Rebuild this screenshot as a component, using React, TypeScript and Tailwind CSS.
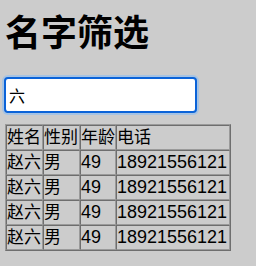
import { useState } from "react";

const people = [
  { name: "赵六", sex: "男", age: 49, phone: "18921556121" },
  { name: "赵六", sex: "男", age: 49, phone: "18921556121" },
  { name: "赵六", sex: "男", age: 49, phone: "18921556121" },
  { name: "赵六", sex: "男", age: 49, phone: "18921556121" },
];

const cell =
  "whitespace-nowrap border border-t-[#6e6e6e] border-l-[#6e6e6e] border-b-[#9a9a9a] border-r-[#9a9a9a] p-0 text-left font-normal align-middle leading-[23px]";

export default function App() {
  const [query, setQuery] = useState("六");
  const rows = people.filter((p) => p.name.includes(query));

  return (
    <div className="min-h-screen bg-[#cccccc] px-[5px] pt-[12px] text-black [font-family:'Liberation_Sans','Noto_Sans_CJK_SC',sans-serif]">
      <h1 className="text-[36px] font-bold leading-[36px] [font-family:'Noto_Sans_CJK_SC',sans-serif]">
        名字筛选
      </h1>

      <input
        value={query}
        onChange={(e) => setQuery(e.target.value)}
        className="ml-[-1px] mt-[29px] block h-[36px] w-[193px] rounded-[4px] border-2 border-[#0b63d8] bg-white px-[3px] text-[16px] outline-none shadow-[0_0_0_2px_#a6c3e3] [font-family:'Noto_Sans_CJK_SC',sans-serif]"
      />

      {/* table border=1 cellspacing=0 look */}
      <table className="mt-[11px] border-separate border-spacing-0 border border-t-[#9a9a9a] border-l-[#9a9a9a] border-b-[#6e6e6e] border-r-[#6e6e6e] text-[17px]">
        <thead>
          <tr>
            <th className={`${cell} w-[37px]`}>姓名</th>
            <th className={`${cell} w-[37px]`}>性别</th>
            <th className={`${cell} w-[36px]`}>年龄</th>
            <th className={`${cell} w-[114px]`}>电话</th>
          </tr>
        </thead>
        <tbody>
          {rows.map((p, i) => (
            <tr key={i}>
              <td className={cell}>{p.name}</td>
              <td className={cell}>{p.sex}</td>
              <td className={`${cell} text-[18px]`}>{p.age}</td>
              <td className={`${cell} text-[18px]`}>{p.phone}</td>
            </tr>
          ))}
        </tbody>
      </table>
    </div>
  );
}
